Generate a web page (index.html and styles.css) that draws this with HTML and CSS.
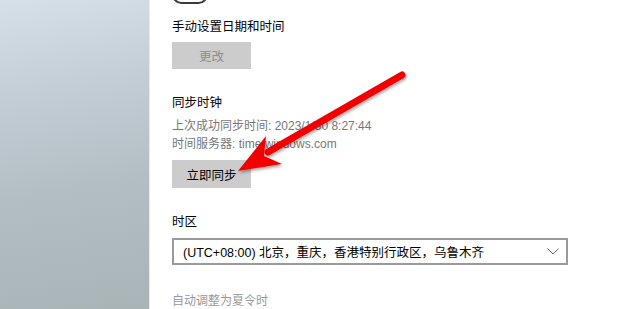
FILE: index.html
```html
<!DOCTYPE html>
<html lang="zh-CN">
<head>
    <meta charset="UTF-8">
    <title>日期和时间</title>
    <link rel="stylesheet" href="styles.css">
</head>
<body>
    <div class="page">
        <div class="sidebar"></div>
        <div class="main">
            <div class="toggle-row">
                <span class="toggle"></span>
                <span class="toggle-label">关</span>
            </div>

            <div class="section-title first">手动设置日期和时间</div>
            <button class="btn disabled">更改</button>

            <div class="section-title sync">同步时钟</div>
            <div class="info">上次成功同步时间: 2023/1/30 8:27:44</div>
            <div class="info">时间服务器: time.windows.com</div>
            <button class="btn sync-btn">立即同步</button>

            <div class="section-title zone">时区</div>
            <div class="select">
                <span>(UTC+08:00) 北京，重庆，香港特别行政区，乌鲁木齐</span>
                <svg class="chevron" width="12" height="7" viewBox="0 0 12 7"><path d="M0.5 0.5 L6 6 L11.5 0.5" fill="none" stroke="#666" stroke-width="1"/></svg>
            </div>

            <div class="dst">自动调整为夏令时</div>
        </div>

        <!-- annotation arrow drawn over the screenshot -->
        <svg class="arrow" width="620" height="309" viewBox="0 0 620 309">
            <defs>
                <filter id="shade" x="-20%" y="-20%" width="140%" height="140%">
                    <feDropShadow dx="1" dy="2" stdDeviation="1.5" flood-color="#000" flood-opacity="0.35"/>
                </filter>
            </defs>
            <g filter="url(#shade)">
                <line x1="402" y1="75" x2="268" y2="152" stroke="#f20000" stroke-width="7" stroke-linecap="round"/>
                <polygon points="238,171 266,136 264,156 282,164" fill="#f20000"/>
            </g>
        </svg>
    </div>
</body>
</html>
```

FILE: styles.css
```css
html,body{margin:0;padding:0}
body{font-family:"Liberation Sans","Noto Sans CJK SC",sans-serif;background:#fff;color:#000;width:620px;height:309px;overflow:hidden}
.page{position:relative;display:flex;height:309px}
.sidebar{width:150px;flex:none;background:linear-gradient(170deg,#d6e0e8 0%,#c3cdd6 30%,#b3bec4 60%,#a9b4b7 100%);border-right:1px solid #e6ebee;box-sizing:border-box}
.main{flex:1;padding-left:22px;overflow:hidden}

.toggle-row{display:flex;align-items:flex-end;gap:10px;margin-top:-15px;height:19px}
.toggle{display:block;flex:none;width:32px;height:15px;border:2px solid #3a3a3a;border-radius:10px}
.toggle-label{font-size:12.5px;line-height:14px;color:#000;position:relative;top:-6px}

.section-title{font-size:12.5px;line-height:16px}
.section-title.first{margin-top:15px}
.section-title.sync{margin-top:26px}
.section-title.zone{margin-top:26px}

.btn{display:block;width:79px;height:27px;border:none;background:#ccc;font-family:inherit;font-size:12.5px;padding:0}
.btn.disabled{margin-top:7px;color:#8e8e8e}
.sync-btn{margin-top:7px;height:28px;color:#000}

.info{font-size:12px;line-height:18px;color:#777}
.section-title.sync + .info{margin-top:6px}

.select{margin-top:8px;width:396px;height:27px;box-sizing:border-box;border:2px solid #9a9a9a;display:flex;align-items:center;justify-content:space-between;padding:0 7px 0 9px;font-size:12.5px}
.chevron{display:block}

.dst{margin-top:28px;font-size:12px;line-height:16px;color:#999}

.arrow{position:absolute;left:0;top:0;pointer-events:none}
```
